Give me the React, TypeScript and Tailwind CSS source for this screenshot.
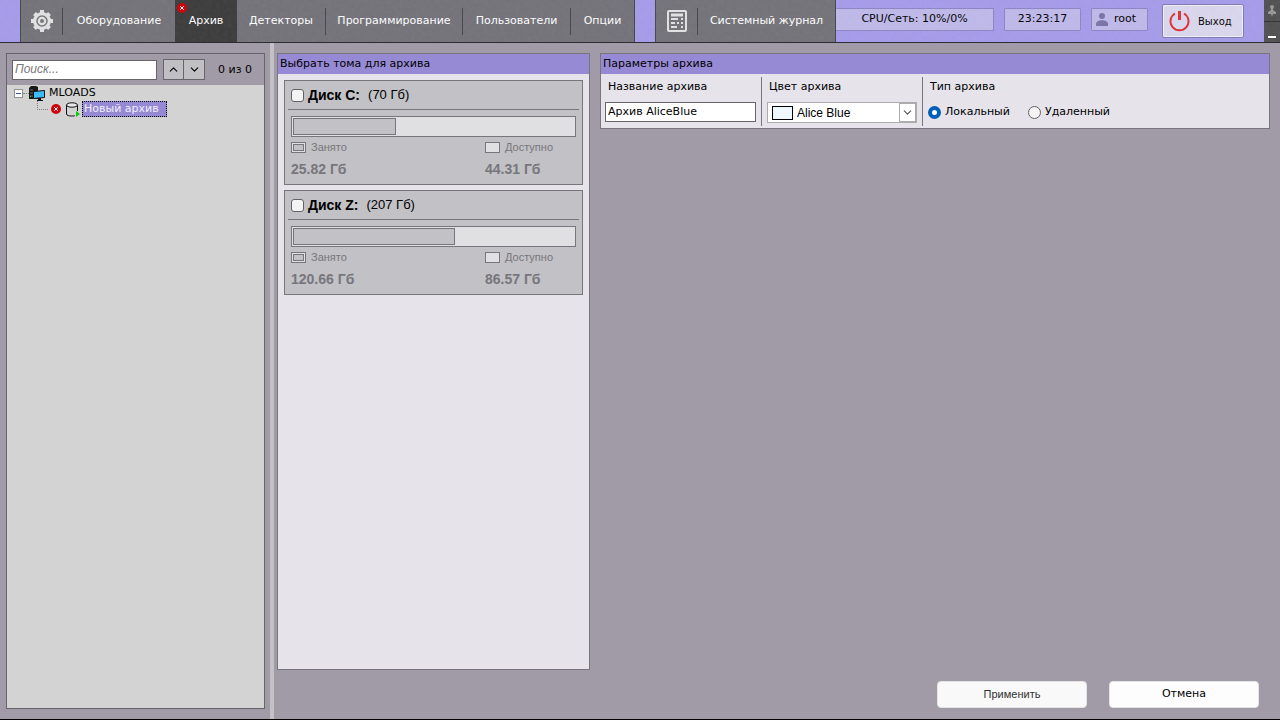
import React, { useState } from "react"
import { ChevronDown, ChevronUp } from "lucide-react"

interface Volume {
  id: string
  name: string
  total: string
  used: string
  free: string
  percent: number
}

const volumes: Volume[] = [
  { id: "c", name: "Диск C:", total: "(70 Гб)", used: "25.82 Гб", free: "44.31 Гб", percent: 36.6 },
  { id: "z", name: "Диск Z:", total: "(207 Гб)", used: "120.66 Гб", free: "86.57 Гб", percent: 57.6 },
]

const navItems = [
  { label: "Оборудование", width: "w-[113px]" },
  { label: "Архив", width: "w-[62px]" },
  { label: "Детекторы", width: "w-[88px]" },
  { label: "Программирование", width: "w-[137px]" },
  { label: "Пользователи", width: "w-[108px]" },
  { label: "Опции", width: "w-[64px]" },
]

// Rough plaster look of the top bar
function Texture() {
  return (
    <svg className="pointer-events-none absolute inset-0 h-full w-full opacity-15" aria-hidden="true">
      <filter id="grain">
        <feTurbulence type="fractalNoise" baseFrequency="0.25" numOctaves="2" seed="4" />
        <feColorMatrix type="saturate" values="0" />
        <feComponentTransfer>
          <feFuncA type="linear" slope="0.5" />
        </feComponentTransfer>
      </filter>
      <rect width="100%" height="100%" filter="url(#grain)" />
    </svg>
  )
}

function GearIcon() {
  return (
    <svg width="24" height="24" viewBox="0 0 24 24" fill="none" aria-hidden="true">
      <path
        d="M12 1v4M12 19v4M1 12h4M19 12h4M4.500 4.500l3 3M16.500 16.500l3 3M19.500 4.500l-3 3M7.500 16.500l-3 3"
        stroke="#e2e2e2"
        strokeWidth="4"
      />
      <circle cx="12" cy="12" r="9" fill="#e2e2e2" />
      <circle cx="12" cy="12" r="5" stroke="#77767d" strokeWidth="1.5" />
      <circle cx="12" cy="12" r="2" fill="#77767d" />
    </svg>
  )
}

function JournalIcon() {
  return (
    <svg width="20" height="22" viewBox="0 0 20 22" fill="none" stroke="#e2e2e2" strokeWidth="2" aria-hidden="true">
      <rect x="1" y="1" width="18" height="20" rx="1" />
      <path d="M4 5h12" strokeWidth="3" />
      <path d="M4 9h7M4 13h4M4 17h6M14 9h2M14 13h2M14 17h2M10 13h2" />
    </svg>
  )
}

function ErrorIcon() {
  return (
    <svg width="10" height="10" viewBox="0 0 10 10" aria-hidden="true">
      <circle cx="5" cy="5" r="5" fill="#d00008" />
      <path d="M3.200 3.200l3.600 3.600M6.800 3.200L3.200 6.800" stroke="#fff" strokeWidth="1" />
    </svg>
  )
}

function ServerIcon() {
  return (
    <svg width="17" height="17" viewBox="0 0 17 17" aria-hidden="true">
      <path d="M0 3l2-2h5l2 1v12H0z" fill="#181818" />
      <path d="M1 5h3M1 8h3M1 11h3" stroke="#666" />
      <rect x="1" y="11" width="1" height="1" fill="#2bd02b" />
      <path d="M4.500 6.500l11-1v7l-11 1z" fill="#3dbcf8" stroke="#111" />
      <path d="M9 13h3v2h2v1H8v-1h1z" fill="#111" />
    </svg>
  )
}

function DatabaseIcon() {
  return (
    <svg width="15" height="15" viewBox="0 0 15 15" fill="none" aria-hidden="true">
      <path d="M1.500 3v9c0 1.500 3 2 5 2s3 0 3.500-.5M12.500 3v6" stroke="#111" />
      <ellipse cx="7" cy="3" rx="5.5" ry="2.2" stroke="#111" fill="#e8e8e8" />
      <path d="M11 9l4 3l-4 3z" fill="#10c810" />
    </svg>
  )
}

function TopBar() {
  const [active, setActive] = useState("Архив")

  return (
    <header className="relative flex h-[43px] shrink-0 border-b border-[#2d2b33] bg-[#a59bea] pl-5 text-[11px]">
      <nav className="flex border-x border-[#45454a] bg-[#737279] text-white">
        <div className="flex w-[41px] items-center justify-center pl-px">
          <GearIcon />
        </div>
        {navItems.map((item) => (
          <div key={item.label} className={`relative flex items-center ${item.width}`}>
            {active !== item.label && item.label !== "Детекторы" && <div className="h-[27px] w-px bg-[#45454a]" />}
            <button
              onClick={() => setActive(item.label)}
              className={`h-full flex-1 whitespace-nowrap ${active === item.label ? "bg-[#3b3b3b]" : ""}`}
            >
              {item.label}
            </button>
            {item.label === "Архив" && (
              <span className="absolute top-[3px] left-[2px]">
                <ErrorIcon />
              </span>
            )}
          </div>
        ))}
      </nav>
      <div className="ml-5 flex w-[181px] items-center border-x border-[#45454a] bg-[#737279] text-white">
        <div className="flex w-[41px] justify-center">
          <JournalIcon />
        </div>
        <div className="h-[27px] w-px bg-[#45454a]" />
        <button className="h-full flex-1 whitespace-nowrap">Системный журнал</button>
      </div>
      <div className="mt-2 flex h-[23px] w-[158px] items-center justify-center border border-l-0 border-[#8d84c4] bg-[#bfb9ea]">
        CPU/Сеть: 10%/0%
      </div>
      <div className="mt-2 ml-[10px] flex h-[23px] w-[77px] items-center justify-center rounded-[1px] border border-[#8d84c4] bg-[#bfb9ea]">
        23:23:17
      </div>
      <div className="mt-2 ml-[10px] flex h-[23px] w-[57px] items-center gap-[6px] rounded-[1px] border border-[#8d84c4] bg-[#bfb9ea] pl-1">
        <svg width="12" height="13" viewBox="0 0 12 13" fill="#7a73a4" aria-hidden="true">
          <circle cx="6" cy="3" r="3" />
          <path d="M0 13v-2c0-5 12-5 12 0v2z" />
        </svg>
        root
      </div>
      <button className="mt-1 ml-[14px] flex h-[34px] w-[82px] items-center gap-2 rounded-[2px] border border-[#827aae] bg-[#dad7ee] pl-[6px] text-[10px] shadow-[inset_0_0_0_1px_#eeeefa]">
        <svg width="21" height="21" viewBox="0 0 21 21" fill="none" stroke="#dc3038" strokeWidth="2" aria-hidden="true">
          <path d="M6 2.500a9 9 0 1 0 9 0" />
          <path d="M10.500 0v9" strokeWidth="3" />
        </svg>
        Выход
      </button>
      <Texture />
      <div className="ml-auto flex w-4 flex-col bg-[#505050]">
        <button aria-label="Закрепить" className="flex h-[22px] items-center justify-center border-b border-[#2f2f2f]">
          <svg width="8" height="12" viewBox="0 0 8 12" fill="#969696" aria-hidden="true">
            <circle cx="4" cy="2" r="2" />
            <path d="M3 3h2v2l3 2v2H5l-1 3l-1-3H0V7l3-2z" />
          </svg>
        </button>
        <button aria-label="Свернуть" className="flex flex-1 items-end justify-center pb-1">
          <span className="h-[2px] w-2 bg-white" />
        </button>
      </div>
    </header>
  )
}

function TreePanel() {
  return (
    <aside className="mt-[10px] mb-[10px] ml-[6px] flex w-[259px] flex-col border border-[#66656a] bg-[#d3d3d3]">
      <div className="flex h-[31px] shrink-0 items-center bg-[#a19ba8] pl-[5px]">
        <input
          type="text"
          aria-label="Поиск"
          placeholder="Поиск..."
          className="h-5 w-[145px] border border-[#66656a] bg-white px-[2px] pb-[2px] font-['Liberation_Sans',sans-serif] text-[12px] placeholder:text-[#777] placeholder:italic"
        />
        <div className="ml-[6px] flex text-black">
          <button aria-label="Назад" className="flex h-[21px] w-[21px] items-center justify-center border border-[#66656a] bg-[#c0bfc4]">
            <ChevronUp size={13} strokeWidth={2} />
          </button>
          <button aria-label="Вперед" className="flex h-[21px] w-[21px] items-center justify-center border border-l-0 border-[#66656a] bg-[#c0bfc4]">
            <ChevronDown size={13} strokeWidth={2} />
          </button>
        </div>
        <span className="ml-[13px] pt-[2px]">0 из 0</span>
      </div>
      <ul>
        <li className="flex h-4 items-center pl-[7px]">
          <button aria-label="Свернуть узел" className="flex h-[9px] w-[9px] items-center justify-center border border-[#919191] bg-white">
            <span className="h-px w-[5px] bg-[#3b5aa0]" />
          </button>
          <span className="w-[6px] border-t border-dotted border-[#808080]" />
          <ServerIcon />
          <span className="ml-[3px]">MLOADS</span>
        </li>
        <li className="flex h-4 items-center pl-[30px]">
          <span className="mb-[7px] h-[9px] w-[11px] border-b border-l border-dotted border-[#808080]" />
          <span className="ml-[3px]">
            <ErrorIcon />
          </span>
          <span className="ml-1">
            <DatabaseIcon />
          </span>
          <span className="ml-[2px] h-4 w-[85px] border border-dotted border-black bg-[#978ad5] pl-px leading-[13px] text-[#f0eefc]">
            Новый архив
          </span>
        </li>
      </ul>
    </aside>
  )
}

function VolumeCard({ volume }: { volume: Volume }) {
  return (
    <article className="flex h-[105px] flex-col border border-[#77767c] bg-[#c2c1c5] px-[3px] font-['Liberation_Sans',sans-serif]">
      <label className="flex h-[29px] shrink-0 items-center border-b border-[#77767c] pl-[3px] text-[14px]">
        <input
          type="checkbox"
          className="h-[13px] w-[13px] appearance-none rounded-[3px] border border-[#626262] bg-[#f3f3f3] checked:bg-[#005fb8]"
        />
        <b className="ml-1">{volume.name}</b>
        <span className="ml-2 text-[13px]">{volume.total}</span>
      </label>
      <div className="mx-[3px] mt-[6px] h-[21px] shrink-0 border border-[#77767c] bg-[#e0e0e2] p-px">
        <div className="h-full border border-[#77767c] bg-[#c2c1c5]" style={{ width: `${volume.percent}%` }} />
      </div>
      <div className="mt-[3px] flex pl-[3px] text-[#77767c]">
        <div className="w-[194px]">
          <div className="flex h-[15px] items-center gap-[5px] text-[11px]">
            <span className="h-[11px] w-[15px] border border-[#77767c] bg-[#c2c1c5] p-px shadow-[inset_0_0_0_1px_#e0e0e2]">
              <span className="block h-full border border-[#77767c]" />
            </span>
            Занято
          </div>
          <div className="mt-[5px] text-[14px] leading-[18px] font-bold">{volume.used}</div>
        </div>
        <div>
          <div className="flex h-[15px] items-center gap-[5px] text-[11px]">
            <span className="h-[11px] w-[15px] border border-[#77767c] bg-[#e0e0e2]" />
            Доступно
          </div>
          <div className="mt-[5px] text-[14px] leading-[18px] font-bold">{volume.free}</div>
        </div>
      </div>
    </article>
  )
}

function ArchiveParams() {
  const [name, setName] = useState("Архив AliceBlue")
  const [type, setType] = useState("local")
  const radio = "h-[13px] w-[13px] appearance-none rounded-full border border-[#626262] bg-[#f3f3f3] checked:border-4 checked:border-[#005fb8] checked:bg-white"

  return (
    <section className="border border-[#77767c] bg-[#e6e3ea]">
      <h2 className="h-5 bg-[#978ad5] pl-[2px] leading-[19px]">Параметры архива</h2>
      <div className="flex h-[54px] pt-[3px] pb-[2px]">
        <div className="w-[160px] pl-1">
          <label htmlFor="name" className="block h-[25px] pl-[3px] leading-[19px]">Название архива</label>
          <input
            id="name"
            value={name}
            onChange={(e) => setName(e.target.value)}
            className="block h-5 w-[151px] border border-[#66656a] bg-white px-[2px] pb-[2px]"
          />
        </div>
        <div className="w-[161px] border-l border-[#77767c] pl-[5px]">
          <label htmlFor="color" className="block h-[25px] pl-[2px] leading-[19px]">Цвет архива</label>
          <div className="relative flex h-[21px] w-[150px] border border-[#acacac] bg-white">
            <select id="color" className="w-full appearance-none bg-transparent pl-[29px] font-['Liberation_Sans',sans-serif] text-[12px]">
              <option>Alice Blue</option>
            </select>
            <span className="pointer-events-none absolute top-[3px] left-1 h-[14px] w-[21px] border border-black bg-[#f0f8ff]" />
            <span className="pointer-events-none absolute top-0 right-0 flex h-[19px] w-[17px] items-center justify-center border border-[#acacac]">
              <ChevronDown size={13} strokeWidth={2} color="#555" />
            </span>
          </div>
        </div>
        <div role="radiogroup" aria-labelledby="type-title" className="border-l border-[#77767c] pl-[5px]">
          <div id="type-title" className="h-[25px] pl-[2px] leading-[19px]">Тип архива</div>
          <div className="flex h-[21px] items-center">
            <label className="flex items-center gap-1">
              <input type="radio" name="type" className={radio} checked={type === "local"} onChange={() => setType("local")} />
              Локальный
            </label>
            <label className="ml-[18px] flex items-center gap-1">
              <input type="radio" name="type" className={radio} checked={type === "remote"} onChange={() => setType("remote")} />
              Удаленный
            </label>
          </div>
        </div>
      </div>
    </section>
  )
}

export default function App() {
  return (
    <div className="flex h-screen flex-col border-b border-black bg-[#a19ba8] font-['DejaVu_Sans',sans-serif] text-[11px] text-black">
      <TopBar />
      <main className="flex min-h-0 flex-1">
        <TreePanel />
        <div className="ml-[5px] w-1 bg-[#c2c1c5]" />
        {/* Volumes */}
        <section className="mt-[10px] mb-[49px] ml-[3px] w-[313px] border border-[#77767c] bg-[#e6e3ea]">
          <h2 className="h-5 bg-[#978ad5] pl-[2px] leading-[19px]">Выбрать тома для архива</h2>
          <div className="flex flex-col gap-[5px] px-[6px] pt-[6px]">
            {volumes.map((v) => (
              <VolumeCard key={v.id} volume={v} />
            ))}
          </div>
        </section>
        <div className="mt-[10px] mr-[10px] ml-[10px] flex flex-1 flex-col">
          <ArchiveParams />
          {/* Actions */}
          <div className="mt-auto mr-[11px] mb-[11px] flex justify-end gap-[22px]">
            <button className="h-[27px] w-[150px] rounded-[4px] border border-[#e4e4e4] bg-[#f9f9f9] font-['Liberation_Sans',sans-serif] text-[11px] text-[#303030]">
              Применить
            </button>
            <button className="h-[27px] w-[150px] rounded-[4px] border border-[#e4e4e4] bg-[#fdfdfd]">Отмена</button>
          </div>
        </div>
      </main>
    </div>
  )
}
